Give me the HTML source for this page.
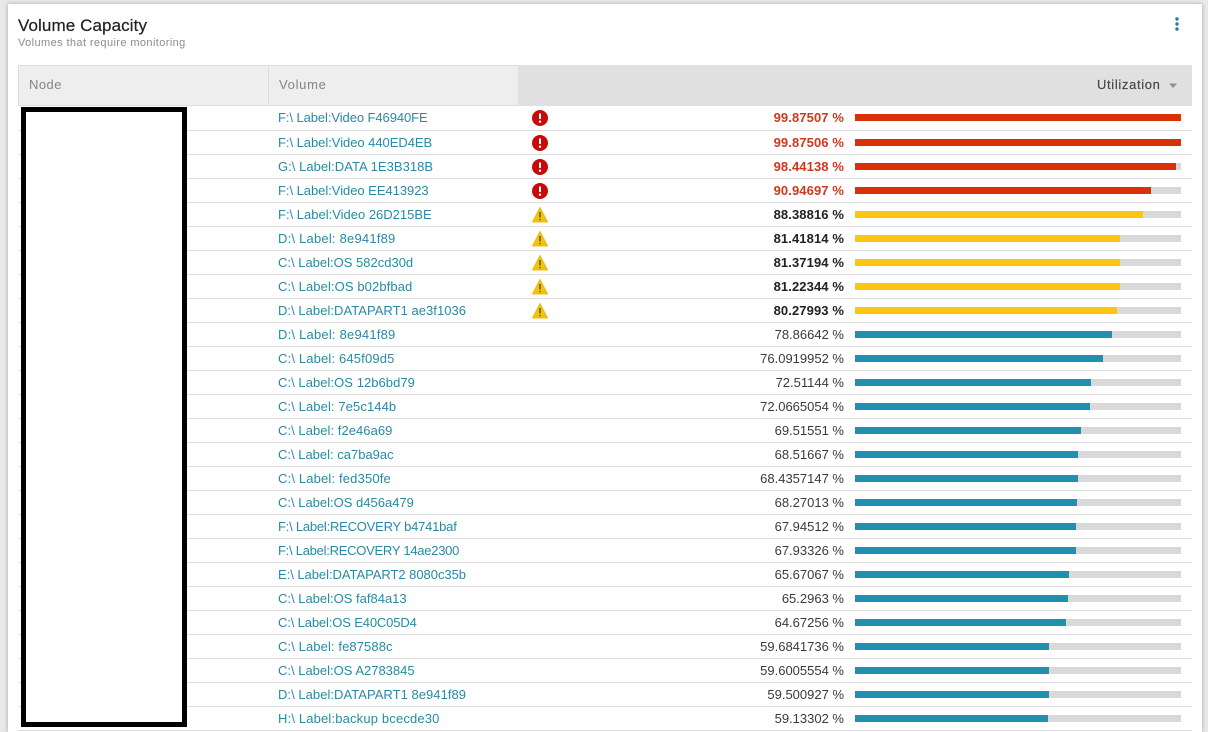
<!DOCTYPE html>
<html><head><meta charset="utf-8">
<style>
html,body{margin:0;padding:0;width:1208px;height:732px;overflow:hidden;background:#e9e9e9;font-family:"Liberation Sans",sans-serif}
#panel{position:absolute;left:8px;top:4px;width:1194px;height:728px;background:#fff;box-shadow:0 0 4px rgba(0,0,0,.3)}
.a{position:absolute;white-space:nowrap}
.r{position:absolute;left:18px;width:1174px;height:24px;border-bottom:1px solid #ddd;box-sizing:content-box}
.r a{position:absolute;left:260px;top:3px;line-height:18px;font-size:13px;letter-spacing:0;color:#2a89a5;white-space:nowrap;text-decoration:none}
.r b,.r i{position:absolute;right:348px;top:3px;line-height:18px;font-size:13px;letter-spacing:0;color:#3a3a3a;white-space:nowrap;font-style:normal;font-weight:400}
.r b{font-weight:700;letter-spacing:.1px;color:#222}
.r b.c{color:#d0371c}
.t{position:absolute;left:837px;top:8px;width:326px;height:7px;background:#d9d9d9}
.t u{display:block;height:7px;background:#1f90b0}
.t u.e{background:#d93208}
.t u.w{background:#fdc50f}
.r svg{position:absolute;left:513px;top:3px}
</style></head><body>
<div id="panel"></div>
<div class="a" style="left:18px;top:15px;font-size:17px;line-height:22px;letter-spacing:.1px;color:#222;-webkit-text-stroke:.2px #222">Volume Capacity</div>
<div class="a" style="left:18px;top:36px;font-size:11px;line-height:14px;letter-spacing:.4px;color:#8c8c8c">Volumes that require monitoring</div>
<svg class="a" style="left:1170px;top:14px" width="14" height="20"><circle cx="7" cy="5" r="1.7" fill="#1f7fa3"/><circle cx="7" cy="10" r="1.7" fill="#1f7fa3"/><circle cx="7" cy="15" r="1.7" fill="#1f7fa3"/></svg>

<div class="a" style="left:18px;top:65px;width:250px;height:41px;background:#eee;border:1px solid #ddd;border-right:0;box-sizing:border-box"></div>
<div class="a" style="left:268px;top:65px;width:250px;height:41px;background:#eee;border:1px solid #ddd;border-right:0;box-sizing:border-box"></div>
<div class="a" style="left:518px;top:65px;width:674px;height:41px;background:#e0e0e0;box-sizing:border-box"></div>
<div class="a" style="left:29px;top:76px;font-size:13px;line-height:18px;letter-spacing:.45px;color:#858585">Node</div>
<div class="a" style="left:279px;top:76px;font-size:13px;line-height:18px;letter-spacing:.7px;color:#858585">Volume</div>
<div class="a" style="left:1097px;top:76px;font-size:13px;line-height:18px;letter-spacing:.65px;color:#444;-webkit-text-stroke:.15px #444">Utilization</div>
<svg class="a" style="left:1168px;top:83px" width="10" height="6"><path d="M1 0.5H9L5 5Z" fill="#8f8f8f"/></svg>

<div class="r" style="top:106px"><a style="letter-spacing:-.08px">F:\ Label:Video F46940FE</a><svg width="18" height="18"><circle cx="9" cy="9" r="8" fill="#c80a0a"/><path d="M9 4.5V10" stroke="#fff" stroke-width="2"/><circle cx="9" cy="12.7" r="1.2" fill="#fff"/></svg><b class="c">99.87507 %</b><div class="t"><u class="e" style="width:326px"></u></div></div>
<div class="r" style="top:131px;height:23px"><a style="letter-spacing:-.04px">F:\ Label:Video 440ED4EB</a><svg width="18" height="18"><circle cx="9" cy="9" r="8" fill="#c80a0a"/><path d="M9 4.5V10" stroke="#fff" stroke-width="2"/><circle cx="9" cy="12.7" r="1.2" fill="#fff"/></svg><b class="c">99.87506 %</b><div class="t"><u class="e" style="width:326px"></u></div></div>
<div class="r" style="top:155px;height:23px"><a style="letter-spacing:.04px">G:\ Label:DATA 1E3B318B</a><svg width="18" height="18"><circle cx="9" cy="9" r="8" fill="#c80a0a"/><path d="M9 4.5V10" stroke="#fff" stroke-width="2"/><circle cx="9" cy="12.7" r="1.2" fill="#fff"/></svg><b class="c">98.44138 %</b><div class="t"><u class="e" style="width:321px"></u></div></div>
<div class="r" style="top:179px;height:23px"><a style="letter-spacing:-.04px">F:\ Label:Video EE413923</a><svg width="18" height="18"><circle cx="9" cy="9" r="8" fill="#c80a0a"/><path d="M9 4.5V10" stroke="#fff" stroke-width="2"/><circle cx="9" cy="12.7" r="1.2" fill="#fff"/></svg><b class="c">90.94697 %</b><div class="t"><u class="e" style="width:296px"></u></div></div>
<div class="r" style="top:203px;height:23px"><a>F:\ Label:Video 26D215BE</a><svg width="18" height="18"><path d="M9 1.5L16.5 16H1.5Z" fill="#f2c40f" stroke="#eabb10" stroke-linejoin="round"/><path d="M9 6V11.5" stroke="#6e5f20" stroke-width="1.6"/><circle cx="9" cy="13.6" r=".9" fill="#6e5f20"/></svg><b>88.38816 %</b><div class="t"><u class="w" style="width:288px"></u></div></div>
<div class="r" style="top:227px;height:23px"><a style="letter-spacing:.21px">D:\ Label: 8e941f89</a><svg width="18" height="18"><path d="M9 1.5L16.5 16H1.5Z" fill="#f2c40f" stroke="#eabb10" stroke-linejoin="round"/><path d="M9 6V11.5" stroke="#6e5f20" stroke-width="1.6"/><circle cx="9" cy="13.6" r=".9" fill="#6e5f20"/></svg><b>81.41814 %</b><div class="t"><u class="w" style="width:265px"></u></div></div>
<div class="r" style="top:251px;height:23px"><a>C:\ Label:OS 582cd30d</a><svg width="18" height="18"><path d="M9 1.5L16.5 16H1.5Z" fill="#f2c40f" stroke="#eabb10" stroke-linejoin="round"/><path d="M9 6V11.5" stroke="#6e5f20" stroke-width="1.6"/><circle cx="9" cy="13.6" r=".9" fill="#6e5f20"/></svg><b>81.37194 %</b><div class="t"><u class="w" style="width:265px"></u></div></div>
<div class="r" style="top:275px;height:23px"><a style="letter-spacing:.1px">C:\ Label:OS b02bfbad</a><svg width="18" height="18"><path d="M9 1.5L16.5 16H1.5Z" fill="#f2c40f" stroke="#eabb10" stroke-linejoin="round"/><path d="M9 6V11.5" stroke="#6e5f20" stroke-width="1.6"/><circle cx="9" cy="13.6" r=".9" fill="#6e5f20"/></svg><b>81.22344 %</b><div class="t"><u class="w" style="width:265px"></u></div></div>
<div class="r" style="top:299px;height:23px"><a style="letter-spacing:.04px">D:\ Label:DATAPART1 ae3f1036</a><svg width="18" height="18"><path d="M9 1.5L16.5 16H1.5Z" fill="#f2c40f" stroke="#eabb10" stroke-linejoin="round"/><path d="M9 6V11.5" stroke="#6e5f20" stroke-width="1.6"/><circle cx="9" cy="13.6" r=".9" fill="#6e5f20"/></svg><b>80.27993 %</b><div class="t"><u class="w" style="width:262px"></u></div></div>
<div class="r" style="top:323px;height:23px"><a style="letter-spacing:.21px">D:\ Label: 8e941f89</a><i>78.86642 %</i><div class="t"><u style="width:257px"></u></div></div>
<div class="r" style="top:347px;height:23px"><a style="letter-spacing:.16px">C:\ Label: 645f09d5</a><i>76.0919952 %</i><div class="t"><u style="width:248px"></u></div></div>
<div class="r" style="top:371px;height:23px"><a style="letter-spacing:.05px">C:\ Label:OS 12b6bd79</a><i>72.51144 %</i><div class="t"><u style="width:236px"></u></div></div>
<div class="r" style="top:395px;height:23px"><a style="letter-spacing:.1px">C:\ Label: 7e5c144b</a><i>72.0665054 %</i><div class="t"><u style="width:235px"></u></div></div>
<div class="r" style="top:419px;height:23px"><a style="letter-spacing:.05px">C:\ Label: f2e46a69</a><i>69.51551 %</i><div class="t"><u style="width:226px"></u></div></div>
<div class="r" style="top:443px;height:23px"><a>C:\ Label: ca7ba9ac</a><i>68.51667 %</i><div class="t"><u style="width:223px"></u></div></div>
<div class="r" style="top:467px;height:23px"><a style="letter-spacing:.16px">C:\ Label: fed350fe</a><i>68.4357147 %</i><div class="t"><u style="width:223px"></u></div></div>
<div class="r" style="top:491px;height:23px"><a>C:\ Label:OS d456a479</a><i>68.27013 %</i><div class="t"><u style="width:222px"></u></div></div>
<div class="r" style="top:515px;height:23px"><a style="letter-spacing:-.22px">F:\ Label:RECOVERY b4741baf</a><i>67.94512 %</i><div class="t"><u style="width:221px"></u></div></div>
<div class="r" style="top:539px;height:23px"><a style="letter-spacing:-.26px">F:\ Label:RECOVERY 14ae2300</a><i>67.93326 %</i><div class="t"><u style="width:221px"></u></div></div>
<div class="r" style="top:563px;height:23px"><a style="letter-spacing:-.04px">E:\ Label:DATAPART2 8080c35b</a><i>65.67067 %</i><div class="t"><u style="width:214px"></u></div></div>
<div class="r" style="top:587px;height:23px"><a>C:\ Label:OS faf84a13</a><i>65.2963 %</i><div class="t"><u style="width:213px"></u></div></div>
<div class="r" style="top:611px;height:23px"><a style="letter-spacing:-.14px">C:\ Label:OS E40C05D4</a><i>64.67256 %</i><div class="t"><u style="width:211px"></u></div></div>
<div class="r" style="top:635px;height:23px"><a style="letter-spacing:.1px">C:\ Label: fe87588c</a><i>59.6841736 %</i><div class="t"><u style="width:194px"></u></div></div>
<div class="r" style="top:659px;height:23px"><a>C:\ Label:OS A2783845</a><i>59.6005554 %</i><div class="t"><u style="width:194px"></u></div></div>
<div class="r" style="top:683px;height:23px"><a style="letter-spacing:.04px">D:\ Label:DATAPART1 8e941f89</a><i>59.500927 %</i><div class="t"><u style="width:194px"></u></div></div>
<div class="r" style="top:707px;height:23px"><a style="letter-spacing:.16px">H:\ Label:backup bcecde30</a><i>59.13302 %</i><div class="t"><u style="width:193px"></u></div></div>

<div class="a" style="left:21px;top:107px;width:166px;height:620px;box-sizing:border-box;background:#fff;border:5px solid #000"></div>
</body></html>
